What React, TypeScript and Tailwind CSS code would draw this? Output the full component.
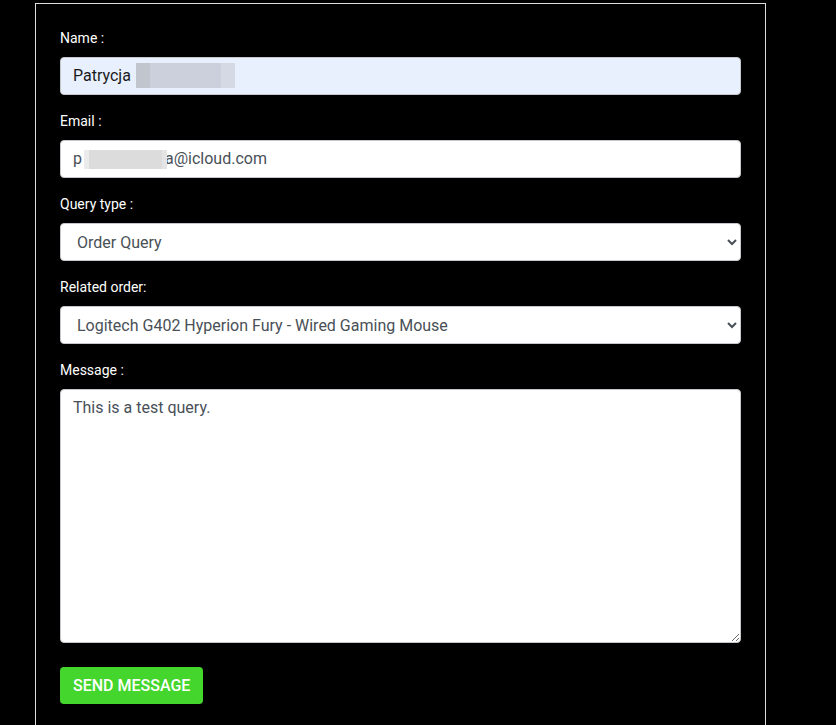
import React from "react";

const font = { fontFamily: "Roboto, 'Liberation Sans', sans-serif" };

function Label({ children }: { children: React.ReactNode }) {
  return (
    <label className="block text-[14px] leading-[21px] font-normal text-white mb-2">
      {children}
    </label>
  );
}

export default function App() {
  return (
    <div className="min-h-[725px] bg-black pt-[3px]" style={font}>
      <div className="ml-[35px] w-[731px] border border-[#dcdcdc] border-b-0 px-6 pt-6 pb-10">
        {/* Name */}
        <div className="mb-4">
          <Label>Name :</Label>
          <div className="relative h-[38px] rounded border border-[#c4c8cc] bg-[#e8f0fe] px-3 flex items-center text-[16px] text-[#1a1a1a]">
            Patrycja
            <div className="absolute left-[75px] top-[5px] flex h-[25px]">
              <div className="w-[14px] bg-[#c1c5cd]" />
              <div className="w-[71px] bg-[#cbd0dc]" />
              <div className="w-[14px] bg-[#d5d9e4]" />
            </div>
          </div>
        </div>

        {/* Email */}
        <div className="mb-4">
          <Label>Email :</Label>
          <div className="relative h-[38px] rounded border border-[#c4c8cc] bg-white px-3 flex items-center text-[16px] text-[#495057]">
            <span>p</span>
            <span className="inline-block w-[83px]" />
            <span>a@icloud.com</span>
            <div className="absolute left-[23px] top-[9px] flex h-[19px]">
              <div className="w-[5px] bg-[#ebebeb]" />
              <div className="w-[73px] bg-[#dcdcdc]" />
              <div className="w-[5px] bg-[#e4e4e4]" />
            </div>
          </div>
        </div>

        {/* Query type */}
        <div className="mb-4">
          <Label>Query type :</Label>
          <select
            defaultValue="order"
            className="block w-full h-[38px] rounded border border-[#c4c8cc] bg-white px-3 text-[16px] text-[#495057]"
          >
            <option value="order">Order Query</option>
            <option value="general">General Query</option>
          </select>
        </div>

        {/* Related order */}
        <div className="mb-4">
          <Label>Related order:</Label>
          <select
            defaultValue="g402"
            className="block w-full h-[38px] rounded border border-[#c4c8cc] bg-white px-3 text-[16px] text-[#495057]"
          >
            <option value="g402">Logitech G402 Hyperion Fury - Wired Gaming Mouse</option>
          </select>
        </div>

        {/* Message */}
        <div className="mb-6">
          <Label>Message :</Label>
          <textarea
            defaultValue="This is a test query."
            className="block w-full h-[254px] rounded border border-[#c4c8cc] bg-white px-3 py-1.5 text-[16px] leading-6 text-[#495057]"
          />
        </div>

        <button className="h-[37px] rounded bg-[#44d62c] px-[13px] text-[16px] font-medium uppercase text-white">
          Send Message
        </button>
      </div>
    </div>
  );
}
